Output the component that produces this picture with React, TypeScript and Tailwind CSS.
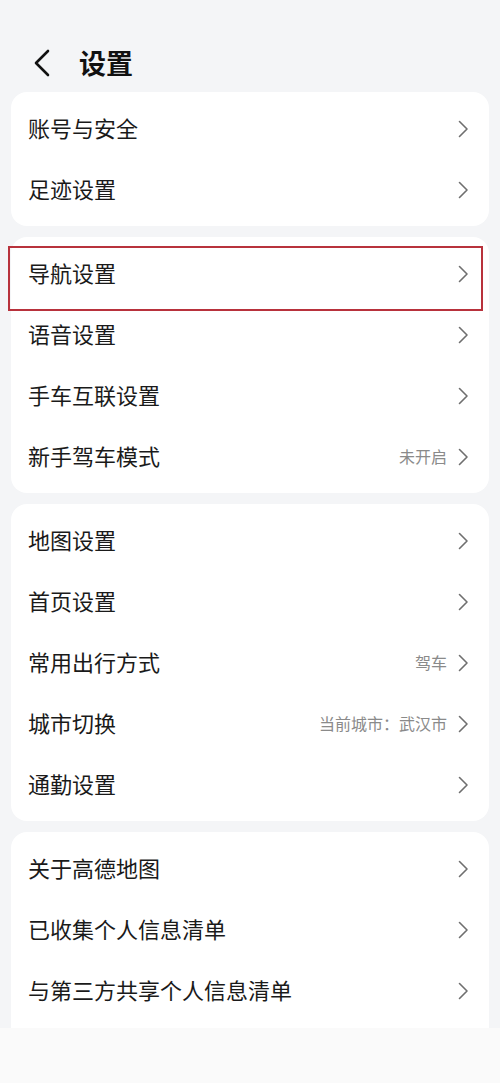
import { Fragment } from 'react';

type Item = { label: string; value?: string };

const groups: Item[][] = [
  [{ label: '账号与安全' }, { label: '足迹设置' }],
  [
    { label: '导航设置' },
    { label: '语音设置' },
    { label: '手车互联设置' },
    { label: '新手驾车模式', value: '未开启' },
  ],
  [
    { label: '地图设置' },
    { label: '首页设置' },
    { label: '常用出行方式', value: '驾车' },
    { label: '城市切换', value: '当前城市：武汉市' },
    { label: '通勤设置' },
  ],
  [
    { label: '关于高德地图' },
    { label: '已收集个人信息清单' },
    { label: '与第三方共享个人信息清单' },
  ],
];

function Chevron() {
  return (
    <svg width="11" height="18" viewBox="0 0 11 18" fill="none" className="shrink-0">
      <path d="M1.5 1.5 L9 9 L1.5 16.5" stroke="#6f6f6f" strokeWidth="1.6" strokeLinecap="round" strokeLinejoin="round" />
    </svg>
  );
}

function Row({ item }: { item: Item }) {
  return (
    <div className="flex h-[61px] items-center pl-[17px] pr-[20px]">
      <span className="flex-1 pb-[3px] text-[22px] leading-none text-[#1a1a1a]">{item.label}</span>
      {item.value && (
        <span className="mr-[11px] pb-[2px] text-[16px] leading-none text-[#8a8a8a]">{item.value}</span>
      )}
      <Chevron />
    </div>
  );
}

export default function App() {
  return (
    <div className="w-[500px] font-['Noto_Sans_CJK_SC',sans-serif]">
      <div className="relative h-[1028px] overflow-hidden bg-[#f4f5f7]">
        {/* Header */}
        <header className="flex h-[92px] items-center pt-[34px]">
          <svg width="20" height="30" viewBox="0 0 20 30" fill="none" className="ml-[32px]">
            <path d="M16 3 L4 15 L16 27" stroke="#111" strokeWidth="2.6" strokeLinecap="round" strokeLinejoin="round" />
          </svg>
          <h1 className="ml-[27px] pb-[2px] text-[27px] font-bold leading-none text-[#111]">设置</h1>
        </header>

        {/* Groups */}
        <div className="flex flex-col gap-[11px] px-[11px]">
          {groups.map((group, gi) => (
            <div
              key={gi}
              className={`rounded-[16px] bg-white pt-[6px] ${gi === groups.length - 1 ? 'pb-[40px]' : 'pb-[6px]'}`}
            >
              {group.map((item) => (
                <Fragment key={item.label}>
                  <Row item={item} />
                </Fragment>
              ))}
            </div>
          ))}
        </div>

        {/* Highlight box */}
        <div className="absolute left-[8px] top-[246px] h-[65px] w-[475px] border-2 border-[#b8323c]" />
      </div>
      <div className="h-[55px] bg-[#fafafa]" />
    </div>
  );
}
